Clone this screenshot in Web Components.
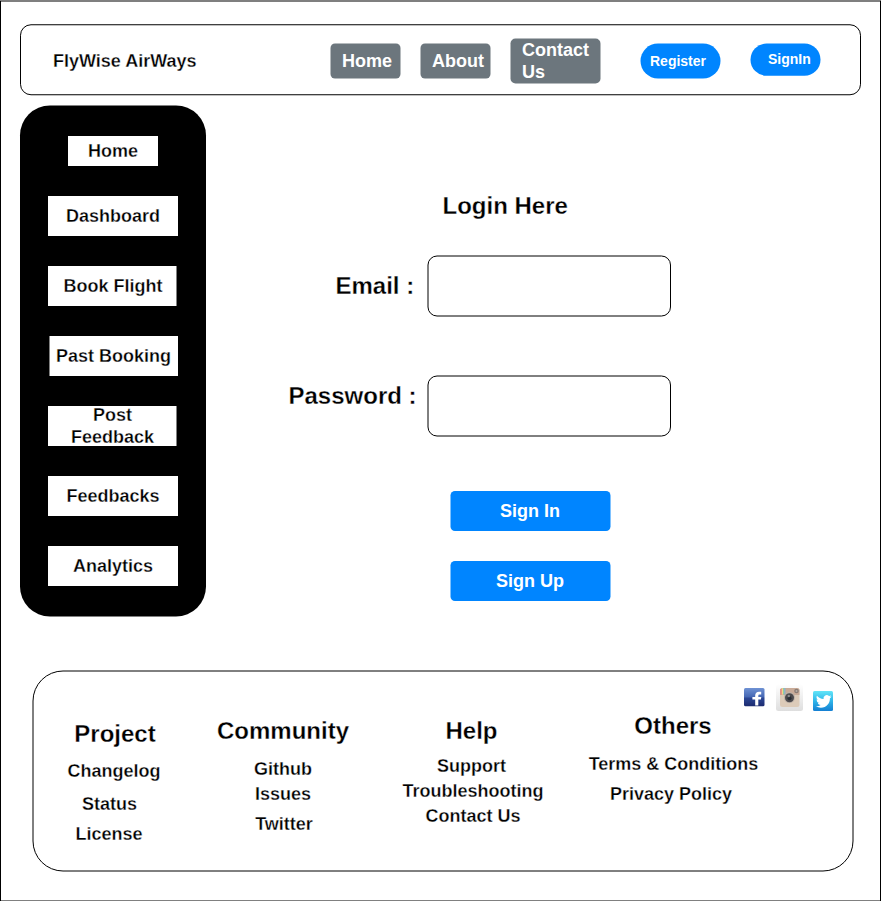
<!DOCTYPE html>
<html lang="en">
<head>
<meta charset="utf-8">
<title>FlyWise AirWays</title>
<style>
html,body{margin:0;padding:0;background:#fff;width:881px;height:901px;overflow:hidden}
body{font:bold 18px/22px "Liberation Sans",Arial,sans-serif;color:#000}
</style>
</head>
<body>
<fw-app></fw-app>
<script>
function define(name, css, html){
  customElements.define(name, class extends HTMLElement{
    constructor(){
      super();
      this.attachShadow({mode:'open'}).innerHTML = '<style>'+css+'</style>'+html;
    }
  });
}

// Box with an outline drawn behind its slotted content.
// rect="x y width height radius" is relative to the box.
customElements.define('fw-shape', class extends HTMLElement{
  connectedCallback(){
    if(this.shadowRoot) return;
    const [x,y,w,h,r] = this.getAttribute('rect').split(' ');
    const fill = this.getAttribute('fill') || '#fff';
    const stroke = this.getAttribute('stroke') || 'none';
    this.attachShadow({mode:'open'}).innerHTML = `<style>
      :host{display:block;position:relative;box-sizing:border-box;flex:none}
      svg{position:absolute;left:0;top:0;width:100%;height:100%;overflow:visible}
      div{position:relative;height:100%}
    </style><svg><rect x="${x}" y="${y}" width="${w}" height="${h}" rx="${r}" fill="${fill}" stroke="${stroke}"/></svg><div><slot></slot></div>`;
  }
});

// Dark labels are thinned slightly by a hairline in the background colour.
define('fw-label', `
  :host{display:block;white-space:nowrap;flex:none;-webkit-text-stroke:.3px #fff}
  :host([big]){font-size:24px;line-height:28px}
  :host([small]){font-size:14px;line-height:16px}
  :host([light]){color:#fff;-webkit-text-stroke:0}
`, '<slot></slot>');

define('fw-header', `
  :host{display:block}
  .row{display:flex;align-items:flex-start}
  .title{width:277px;padding:26px 0 0 33px}
  .nav{width:70px;height:36px;margin:19px 20px 0 0}
  .nav fw-label{padding:7px 0 0 12px}
  .contact{width:90px;height:46px;margin:14px 40px 0 0}
  .contact fw-label{padding:1px 0 0 12px}
  .reg{width:80px;height:36px;margin:19px 30px 0 0}
  .reg fw-label{padding:10px 0 0 10px}
  .sign{width:70px;height:33px;margin-top:19px}
  .sign fw-label{padding:8px 0 0 18px}
`, `
  <fw-shape rect="0.5 0.75 840 70 10.5" stroke="#000" style="width:841px;height:71px">
    <div class="row">
      <fw-label class="title">FlyWise AirWays</fw-label>
      <fw-shape class="nav" rect="0.5 0.5 70 35 4.5" fill="#6C767D"><fw-label light>Home</fw-label></fw-shape>
      <fw-shape class="nav" rect="0.5 0.5 70 35 4.5" fill="#6C767D"><fw-label light>About</fw-label></fw-shape>
      <fw-shape class="contact" rect="0.5 0.5 90 45 5" fill="#6C767D"><fw-label light>Contact<br>Us</fw-label></fw-shape>
      <fw-shape class="reg" rect="0.5 0.5 80 35 17.5" fill="#0085FF"><fw-label small light>Register</fw-label></fw-shape>
      <fw-shape class="sign" rect="0.5 0.5 70 32.3 16.1" fill="#0085FF"><fw-label small light>SignIn</fw-label></fw-shape>
    </div>
  </fw-shape>`);

define('fw-sidebar', `
  :host{display:block}
  nav{display:flex;flex-direction:column;gap:30px;padding:31px 0 0 28px}
  fw-shape{text-align:center}
  nav fw-shape{width:130px;height:40px}
  nav fw-label{padding-top:9px}
  nav .home{width:90px;height:30px;margin-left:20px}
  nav .home fw-label{padding-top:4px}
  nav .two fw-label{padding-top:0;margin-top:-2px}
`, `
  <fw-shape rect="0 0.5 186 511 30" fill="#000" style="width:186px;height:511px">
    <nav>
      <fw-shape class="home" rect="0 0 90 30 0"><fw-label>Home</fw-label></fw-shape>
      <fw-shape rect="0 0 130 40 0"><fw-label>Dashboard</fw-label></fw-shape>
      <fw-shape rect="0 0 128.5 40 0"><fw-label>Book Flight</fw-label></fw-shape>
      <fw-shape rect="1.5 0 128.5 40 0"><fw-label style="padding-left:1px">Past Booking</fw-label></fw-shape>
      <fw-shape class="two" rect="0 0 128.5 40 0"><fw-label style="padding-right:1px">Post<br>Feedback</fw-label></fw-shape>
      <fw-shape rect="0 0 130 40 0"><fw-label>Feedbacks</fw-label></fw-shape>
      <fw-shape rect="0 0 130 40 0"><fw-label>Analytics</fw-label></fw-shape>
    </nav>
  </fw-shape>`);

define('fw-login', `
  :host{display:block;padding-top:87px}
  .title{margin-left:236.5px}
  .field{display:flex;align-items:flex-start;justify-content:space-between;box-sizing:border-box;width:465px;height:61px}
  .email{margin-top:35px;padding-left:129.5px}
  .password{margin-top:59px;padding-left:82.5px}
  .email fw-label{padding-top:17px}
  .password fw-label{padding-top:7px}
  .field fw-shape{width:244px;height:61px}
  .btn{width:160px;height:40px;margin:0 0 30px 244px;text-align:center}
  .btn fw-label{padding-top:9px}
  .first{margin-top:55px}
`, `
  <fw-label big class="title">Login Here</fw-label>
  <div class="field email"><fw-label big>Email :</fw-label><fw-shape rect="1 1 242.5 60 9" stroke="#000"></fw-shape></div>
  <div class="field password"><fw-label big>Password :</fw-label><fw-shape rect="1 1 242.5 60 9" stroke="#000"></fw-shape></div>
  <fw-shape class="btn first" rect="0.5 0 160 40 4.5" fill="#0085FF"><fw-label light>Sign In</fw-label></fw-shape>
  <fw-shape class="btn" rect="0.5 0 160 40 4.5" fill="#0085FF"><fw-label light>Sign Up</fw-label></fw-shape>
`);

define('fw-social', `
  :host{display:flex;align-items:flex-start}
  svg{display:block;flex:none}
`, `
  <svg width="21" height="19" viewBox="0 0 21 19" style="margin-top:4px">
    <defs><linearGradient id="f" x2="0" y2="1"><stop offset="0" stop-color="#6f92d4"/><stop offset=".48" stop-color="#4668b4"/><stop offset=".56" stop-color="#2b4694"/><stop offset="1" stop-color="#1c2b70"/></linearGradient></defs>
    <rect width="20.5" height="18.2" rx="1.5" fill="url(#f)"/>
    <path d="M11.2 17.600V11.600H8.400V9.100h2.800V7.600c0-2.500 1.500-3.900 3.800-3.900h2.200v2.700h-1.500c-1 0-1.400.500-1.400 1.400v1.300h3l-.4 2.500h-2.600V17.600z" fill="#fff"/>
  </svg>
  <svg width="28" height="28" viewBox="0 0 28 28" style="margin-left:11px">
    <defs><linearGradient id="b" x2="0" y2="1"><stop offset="0" stop-color="#fff"/><stop offset="1" stop-color="#dedede"/></linearGradient></defs>
    <rect width="27" height="27" rx="2.500" fill="url(#b)"/>
    <g transform="translate(-.5 0)">
    <rect x="4.500" y="4" width="19.500" height="19" rx="2.500" fill="#dccbb9"/>
    <path d="M4.500 11V6.500Q4.500 4 7 4h14.500Q24 4 24 6.500V11z" fill="#c9ab98"/>
    <path d="M5 5h1.300v5.500H5z" fill="#f08080"/><path d="M6.300 4.300h1.200v6.200H6.300z" fill="#f3d48b"/><path d="M7.500 4h1.200v6.500H7.500z" fill="#91cfa0"/><path d="M8.700 4h1.200v6.500H8.700z" fill="#86b5d5"/>
    <circle cx="21" cy="7" r="2.300" fill="#897c76"/><circle cx="21" cy="7" r="1" fill="#b7aaa2"/>
    <circle cx="14" cy="13.600" r="5.500" fill="#beb2a8"/><circle cx="14" cy="13.800" r="4.500" fill="#4c4a4d"/><circle cx="14" cy="14.300" r="2" fill="#292d34"/><circle cx="13.300" cy="12" r="1.200" fill="#8e8c8e"/>
    </g>
  </svg>
  <svg width="20" height="20" viewBox="0 0 20 20" style="margin:7px 0 0 9px">
    <defs><linearGradient id="t" x2="0" y2="1"><stop offset="0" stop-color="#62e5f8"/><stop offset=".5" stop-color="#2eb5e9"/><stop offset="1" stop-color="#147fd2"/></linearGradient></defs>
    <rect width="20" height="20" rx="1.500" fill="url(#t)"/>
    <path transform="translate(2.900 2.600) scale(.65)" d="M23.950 4.570a10 10 0 0 1-2.820.770 4.960 4.960 0 0 0 2.160-2.720c-.950.550-2 .950-3.130 1.180a4.920 4.920 0 0 0-8.380 4.480C7.690 8.090 4.070 6.130 1.640 3.160a4.820 4.820 0 0 0-.670 2.480c0 1.710.870 3.210 2.190 4.100a4.900 4.900 0 0 1-2.230-.620v.060a4.920 4.920 0 0 0 3.950 4.830 5 5 0 0 1-2.210.080 4.940 4.940 0 0 0 4.600 3.420A9.870 9.870 0 0 1 0 19.540a13.990 13.990 0 0 0 7.550 2.210c9.050 0 14-7.500 14-13.980 0-.210 0-.420-.020-.630a9.940 9.940 0 0 0 2.420-2.570z" fill="#fff"/>
  </svg>`);

define('fw-footer', `
  :host{display:block}
  .cols{display:flex;align-items:flex-start}
  section{display:flex;flex-direction:column;align-items:center;flex:none}
  fw-label{height:22px;margin-top:var(--t,0);transform:translateX(var(--x,0))}
  fw-label[big]{height:28px}
  fw-social{margin:14px 0 0 -18px}
`, `
  <fw-shape rect="1 1 820 200 30" stroke="#000" style="width:822px;height:202px">
    <div class="cols">
      <section style="width:164px;padding-top:50px">
        <fw-label big style="--x:1px">Project</fw-label>
        <fw-label style="--t:12px">Changelog</fw-label>
        <fw-label style="--t:11px;--x:-4.5px">Status</fw-label>
        <fw-label style="--t:8px;--x:-5px">License</fw-label>
      </section>
      <section style="width:174px;padding-top:47px">
        <fw-label big>Community</fw-label>
        <fw-label style="--t:13px">Github</fw-label>
        <fw-label style="--t:3px">Issues</fw-label>
        <fw-label style="--t:8px;--x:1px">Twitter</fw-label>
      </section>
      <section style="width:202px;padding-top:47px">
        <fw-label big style="--x:.5px">Help</fw-label>
        <fw-label style="--t:10px;--x:.5px">Support</fw-label>
        <fw-label style="--t:3px;--x:2px">Troubleshooting</fw-label>
        <fw-label style="--t:3px;--x:2px">Contact Us</fw-label>
      </section>
      <section style="width:202px;padding-top:42px">
        <fw-label big>Others</fw-label>
        <fw-label style="--t:13px;--x:.5px">Terms &amp; Conditions</fw-label>
        <fw-label style="--t:8px;--x:-2px">Privacy Policy</fw-label>
      </section>
      <fw-social style="margin-left:-30px"></fw-social>
    </div>
  </fw-shape>`);

define('fw-app', `
  :host{display:block;width:881px;height:901px}
  fw-header{padding:24px 0 0 20px}
  main{display:flex;align-items:flex-start;height:565px;padding:10px 0 0 20px}
  fw-sidebar{width:186px}
  fw-footer{margin-left:32px}
`, `
  <fw-shape rect="0.5 1 880 900 0" stroke="#000" style="width:881px;height:901px">
    <fw-header></fw-header>
    <main><fw-sidebar></fw-sidebar><fw-login></fw-login></main>
    <fw-footer></fw-footer>
  </fw-shape>`);
</script>
</body>
</html>
